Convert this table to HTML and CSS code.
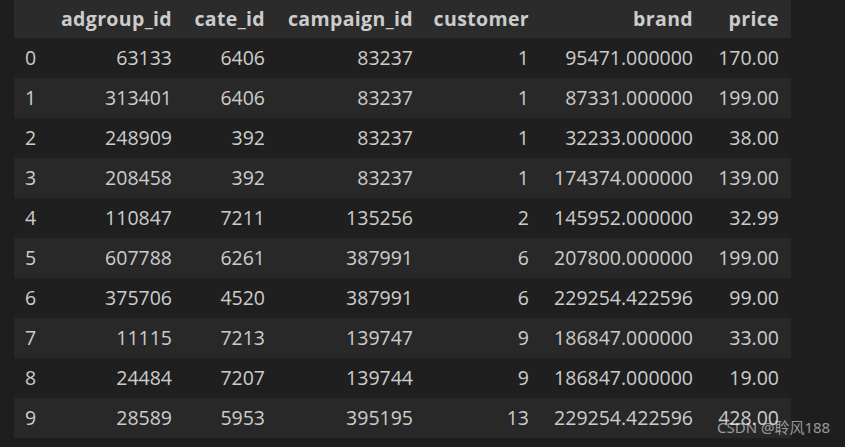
FILE: index.html
```html
<!DOCTYPE html>
<html>
<head>
<meta charset="utf-8">
<link rel="stylesheet" href="styles.css">
</head>
<body>
<div class="page">
  <table class="df">
    <colgroup>
      <col class="c-idx"><col class="c-ad"><col class="c-cate"><col class="c-camp"><col class="c-cust"><col class="c-brand"><col class="c-price">
    </colgroup>
    <thead>
      <tr><th></th><th>adgroup_id</th><th>cate_id</th><th>campaign_id</th><th>customer</th><th>brand</th><th>price</th></tr>
    </thead>
    <tbody>
      <tr><td>0</td><td>63133</td><td>6406</td><td>83237</td><td>1</td><td>95471.000000</td><td>170.00</td></tr>
      <tr><td>1</td><td>313401</td><td>6406</td><td>83237</td><td>1</td><td>87331.000000</td><td>199.00</td></tr>
      <tr><td>2</td><td>248909</td><td>392</td><td>83237</td><td>1</td><td>32233.000000</td><td>38.00</td></tr>
      <tr><td>3</td><td>208458</td><td>392</td><td>83237</td><td>1</td><td>174374.000000</td><td>139.00</td></tr>
      <tr><td>4</td><td>110847</td><td>7211</td><td>135256</td><td>2</td><td>145952.000000</td><td>32.99</td></tr>
      <tr><td>5</td><td>607788</td><td>6261</td><td>387991</td><td>6</td><td>207800.000000</td><td>199.00</td></tr>
      <tr><td>6</td><td>375706</td><td>4520</td><td>387991</td><td>6</td><td>229254.422596</td><td>99.00</td></tr>
      <tr><td>7</td><td>11115</td><td>7213</td><td>139747</td><td>9</td><td>186847.000000</td><td>33.00</td></tr>
      <tr><td>8</td><td>24484</td><td>7207</td><td>139744</td><td>9</td><td>186847.000000</td><td>19.00</td></tr>
      <tr><td>9</td><td>28589</td><td>5953</td><td>395195</td><td>13</td><td>229254.422596</td><td>428.00</td></tr>
    </tbody>
  </table>
  <div class="watermark">CSDN @聆风188</div>
</div>
</body>
</html>
```
FILE: styles.css
```css
html, body {
  margin: 0;
  padding: 0;
  background: #1e1e1e;
}
.page {
  position: relative;
  width: 845px;
  height: 447px;
  overflow: hidden;
  background: #1e1e1e;
  padding-left: 14px;
  box-sizing: border-box;
}
.df {
  border-collapse: collapse;
  table-layout: fixed;
  width: 777px;
  font-family: "Open Sans", "Noto Sans", sans-serif;
  font-size: 19.5px;
  color: #cccccc;
  margin-top: 0;
}
.c-idx { width: 35px; }
.c-ad { width: 135px; }
.c-cate { width: 93px; }
.c-camp { width: 148px; }
.c-cust { width: 116px; }
.c-brand { width: 164px; }
.c-price { width: 86px; }
.df th, .df td {
  padding: 0 12px 0 0;
  text-align: right;
  white-space: nowrap;
  line-height: 40px;
  height: 40px;
}
.df th {
  font-weight: 700;
  letter-spacing: 0.35px;
  height: 38px;
  line-height: 38px;
  background: #2b2b2b;
}
.df thead tr { background: #2b2b2b; }
.df td:first-child {
  text-align: left;
  padding-left: 11px;
}
.df tbody tr:nth-child(odd) { background: #1f1f1f; }
.df tbody tr:nth-child(even) { background: #282828; }
.watermark {
  position: absolute;
  left: 717px;
  top: 416px;
  font-family: "Noto Sans", "Noto Sans CJK SC", sans-serif;
  font-size: 15px;
  color: rgba(255, 255, 255, 0.55);
  white-space: nowrap;
}
```
